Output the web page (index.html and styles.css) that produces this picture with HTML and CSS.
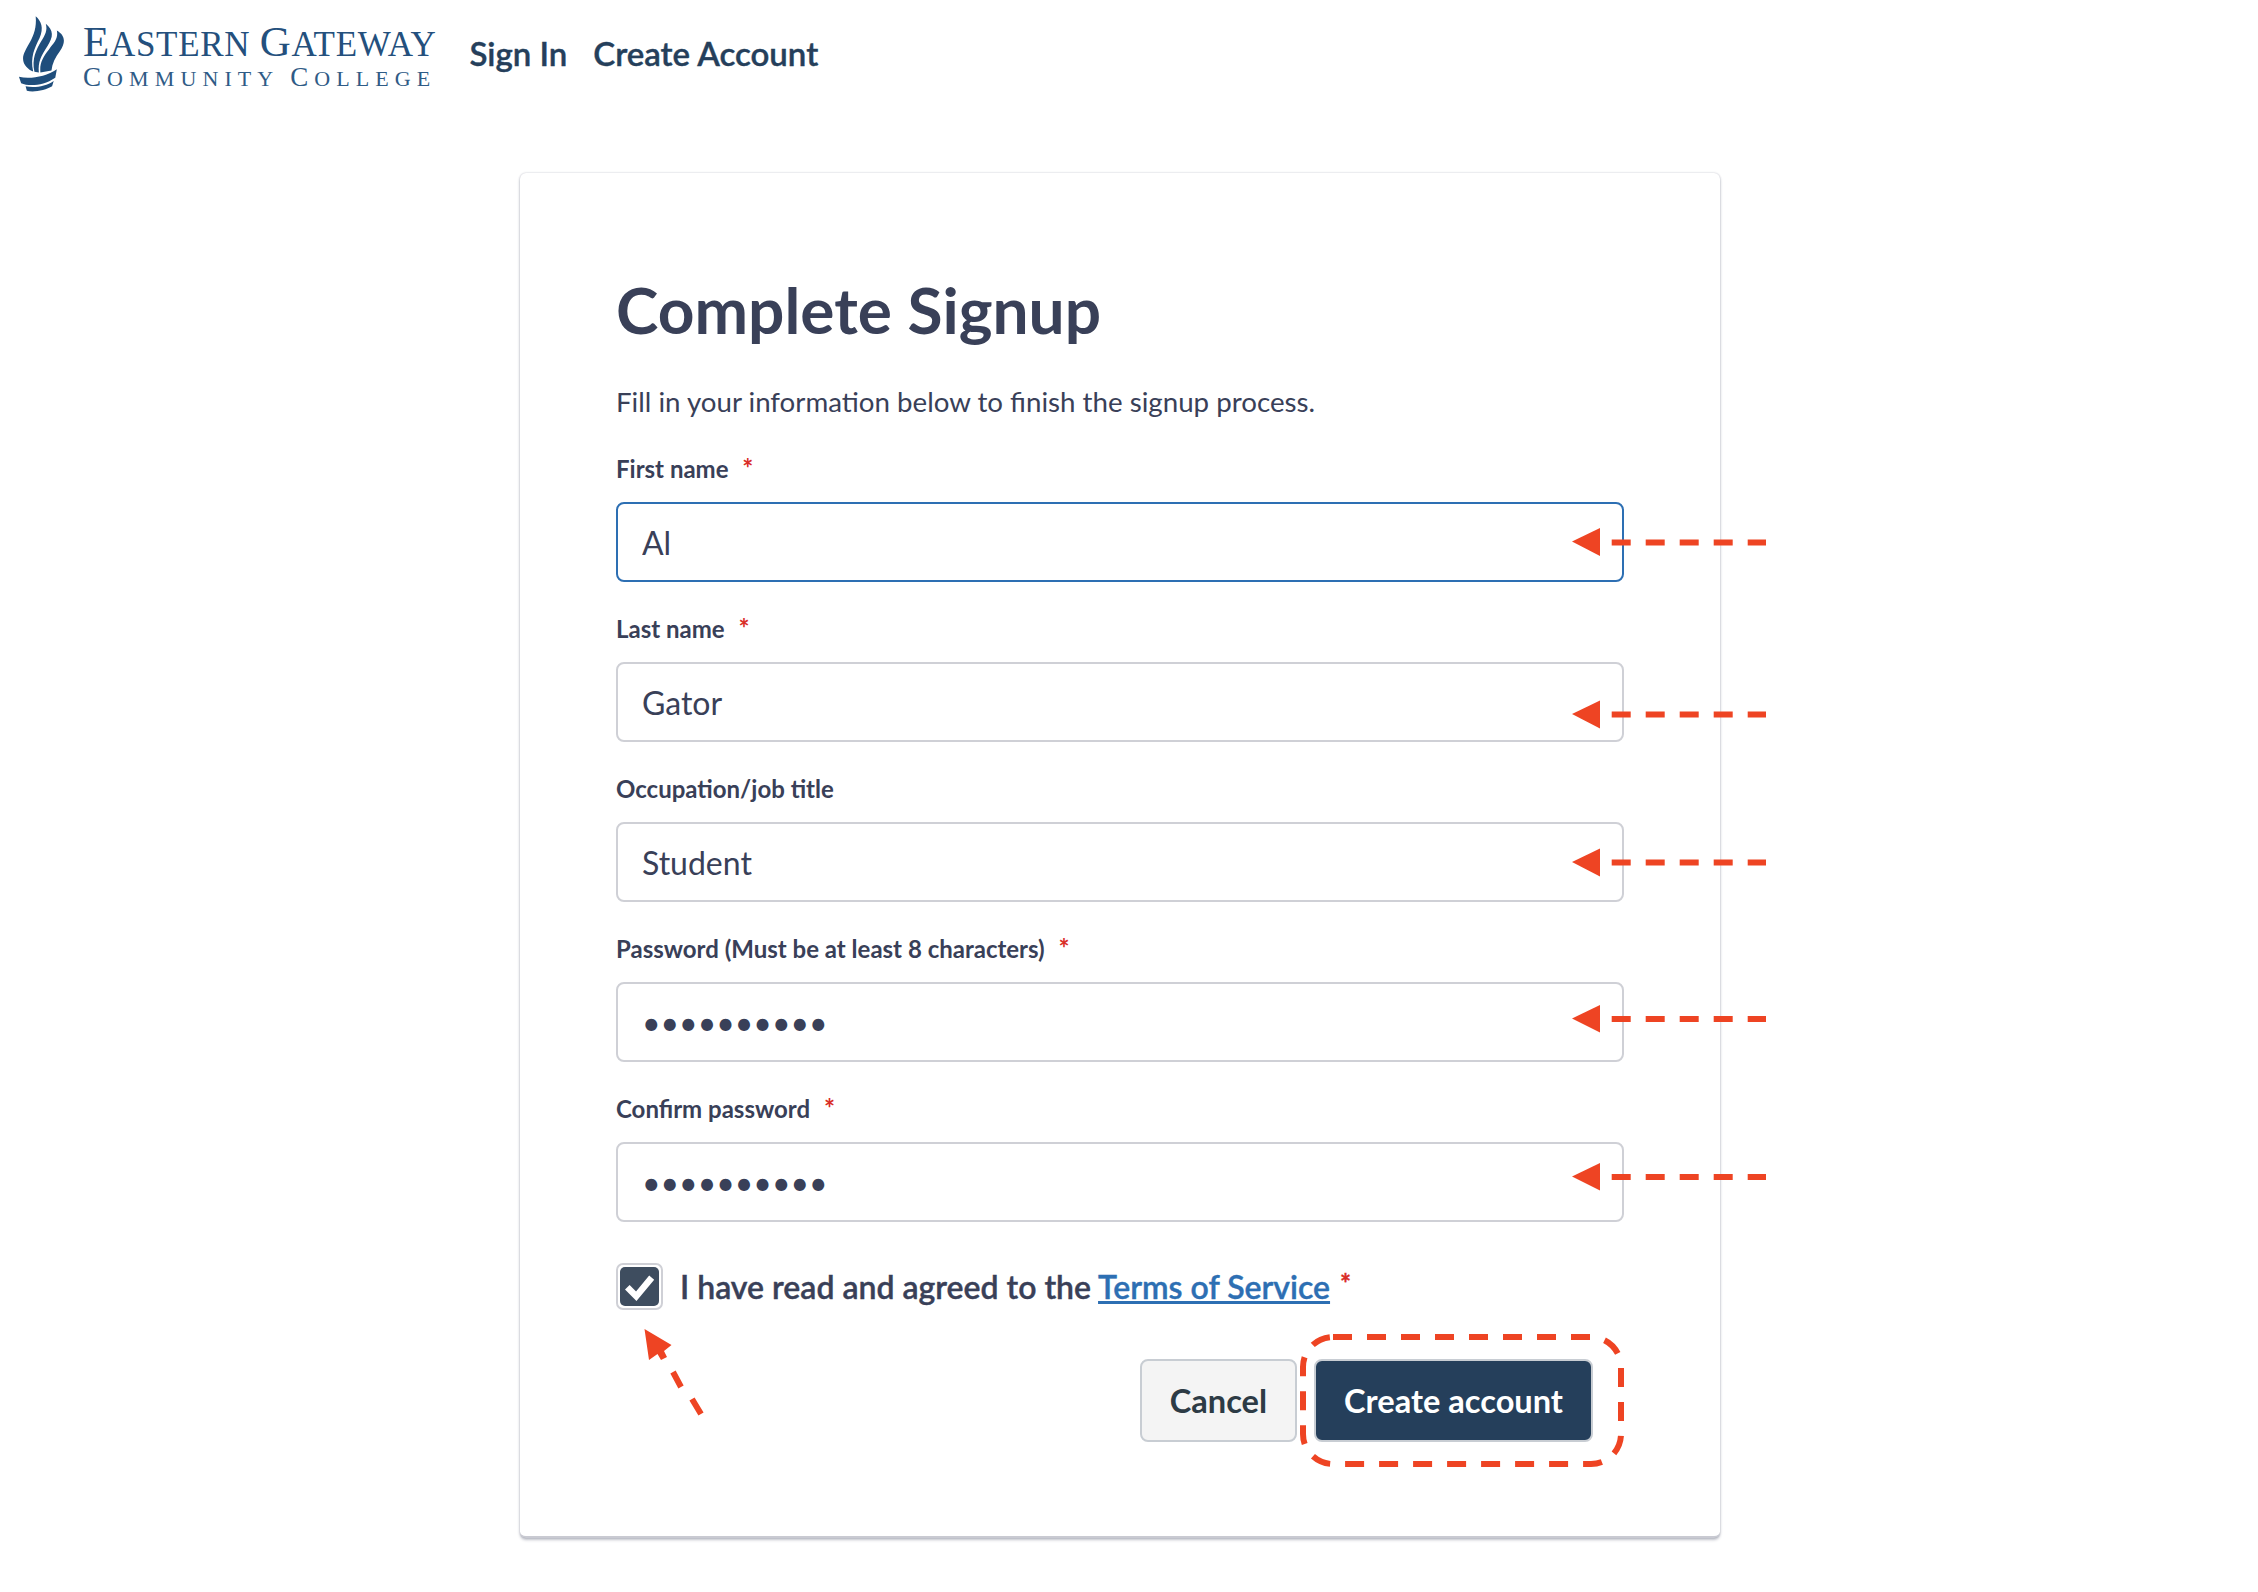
FILE: index.html
```html
<!DOCTYPE html>
<html lang="en">
<head>
    <meta charset="UTF-8">
    <title>Complete Signup</title>
    <link rel="stylesheet" href="styles.css">
</head>
<body>
    <header class="topbar">
        <a class="logo" href="#">
            <svg class="logo-torch" viewBox="52 36 152 244" aria-hidden="true">
                <path d="M108 40C125 55 135 75 120 110C105 140 90 170 100 215C85 210 68 195 68 175C68 140 115 110 108 40Z"/>
                <path d="M140 64C165 85 165 105 145 135C125 165 115 185 118 218L104 216C95 175 110 145 125 120C138 100 146 85 140 64Z"/>
                <path d="M175 85C200 100 205 120 185 150C170 170 160 190 158 212L123 218C120 190 130 170 150 145C168 122 180 110 175 85Z"/>
                <path d="M55 232C90 240 140 232 175 208L170 235C130 262 85 262 62 252Z"/>
                <path d="M76 262C105 268 140 262 165 245L160 262C140 275 100 282 80 276Z"/>
            </svg>
            <span class="logo-text">
                <span class="logo-top"><span class="big">E</span>astern <span class="big">G</span>ateway</span>
                <span class="logo-bottom"><span class="big">C</span>ommunity <span class="big">C</span>ollege</span>
            </span>
        </a>
        <nav class="nav">
            <a href="#">Sign In</a>
            <a href="#">Create Account</a>
        </nav>
    </header>

    <main class="card">
        <h1>Complete Signup</h1>
        <p class="intro">Fill in your information below to finish the signup process.</p>
        <form>
            <div class="field">
                <label for="first">First name <span class="req">*</span></label>
                <input id="first" class="focused" type="text" value="Al">
            </div>
            <div class="field">
                <label for="last">Last name <span class="req">*</span></label>
                <input id="last" type="text" value="Gator">
            </div>
            <div class="field">
                <label for="job">Occupation/job title</label>
                <input id="job" type="text" value="Student">
            </div>
            <div class="field">
                <label for="pass">Password (Must be at least 8 characters) <span class="req">*</span></label>
                <input id="pass" type="password" value="aaaaaaaaaa">
            </div>
            <div class="field">
                <label for="confirm">Confirm password <span class="req">*</span></label>
                <input id="confirm" type="password" value="aaaaaaaaaa">
            </div>
            <div class="terms">
                <span class="checkbox">
                    <svg viewBox="0 0 24 24" aria-hidden="true"><path d="M4.500 12.500L10 18L19.500 6.500"/></svg>
                </span>
                <span>I have read and agreed to the <a href="#">Terms of Service</a> <span class="req">*</span></span>
            </div>
            <div class="actions">
                <button type="button" class="button">Cancel</button>
                <button type="button" class="button primary">Create account</button>
            </div>
        </form>
    </main>

    <!-- red annotations drawn over the form -->
    <svg class="marks" width="2258" height="1592" viewBox="0 0 2258 1592" aria-hidden="true">
        <g class="fill">
            <polygon points="1572,541.500 1600,528 1600,556"/>
            <polygon points="1572,714 1600,700.500 1600,728.500"/>
            <polygon points="1572,862 1600,848.500 1600,876.500"/>
            <polygon points="1572,1018.500 1600,1005 1600,1032.500"/>
            <polygon points="1572,1176.500 1600,1163 1600,1190.500"/>
            <polygon points="644.500,1329 671.500,1345 664,1351 667,1357 661,1360 657.500,1354 649,1360"/>
        </g>
        <g class="dash">
            <path d="M1611.700 542.500H1766"/>
            <path d="M1611.700 714.500H1766"/>
            <path d="M1611.700 862.500H1766"/>
            <path d="M1611.700 1019H1766"/>
            <path d="M1611.700 1177H1766"/>
            <path d="M673 1372L681 1387M692 1399L701 1414"/>
            <rect x="1303" y="1337" width="318" height="127" rx="30"/>
        </g>
    </svg>
</body>
</html>
```

FILE: styles.css
```css
body {
    margin: 0;
    min-height: 1592px;
    overflow: hidden;
    font-family: Lato, "Open Sans", sans-serif;
    background: #fff;
    color: #394058;
}
a {
    text-decoration: none;
}
.topbar {
    display: flex;
    align-items: center;
    height: 106px;
    padding-left: 18px;
}
.logo {
    display: flex;
    align-items: center;
    gap: 17px;
}
.logo-torch {
    width: 48px;
    height: 79px;
    fill: #1f4e7c;
}
.logo-text {
    display: flex;
    flex-direction: column;
    gap: 4px;
    padding-top: 8px;
    font-family: "Liberation Serif", serif;
    color: #24507d;
    white-space: nowrap;
    text-transform: uppercase;
}
.logo-top {
    font-size: 35px;
    line-height: 34px;
    letter-spacing: 0.7px;
}
.logo-top .big {
    font-size: 43px;
}
.logo-bottom {
    font-size: 22px;
    line-height: 22px;
    letter-spacing: 6.1px;
    color: #2f5b86;
}
.logo-bottom .big {
    font-size: 27px;
}
.nav {
    display: flex;
    gap: 26px;
    margin-left: 33px;
}
.nav a {
    font-size: 33px;
    font-weight: 600;
    color: #253f5b;
    -webkit-text-stroke: 0.4px #253f5b;
}
.card {
    box-sizing: border-box;
    width: 1200px;
    height: 1365px;
    margin: 67px 0 0 520px;
    padding: 97px 96px 0;
    border-bottom: 2px solid #c9cad2;
    border-radius: 6px;
    background: #fff;
    box-shadow: 0 0 2px rgba(57, 64, 88, 0.3), 0 2px 3px rgba(57, 64, 88, 0.3);
}
h1 {
    margin: 0;
    font-size: 64px;
    line-height: 80px;
    font-weight: 700;
}
.intro {
    margin: 32px 0 0;
    font-size: 27.7px;
    line-height: 40px;
}
form {
    margin-top: 32px;
}
.field {
    margin-bottom: 32px;
}
.field label {
    display: block;
    margin-bottom: 18px;
    font-size: 24px;
    line-height: 30px;
    font-weight: 700;
}
.req {
    margin-left: 8px;
    color: #d92d27;
    font-size: 26px;
    font-weight: 700;
    line-height: 0;
}
input {
    display: block;
    box-sizing: border-box;
    width: 100%;
    height: 80px;
    padding: 0 24px;
    border: 2px solid #cfd0d6;
    border-radius: 8px;
    outline: none;
    font-family: inherit;
    font-size: 32px;
    color: #394058;
}
input.focused {
    border-color: #2d6fb3;
}
.terms {
    display: flex;
    align-items: center;
    gap: 17px;
    margin-top: 41px;
    font-size: 32px;
    font-weight: 600;
    -webkit-text-stroke: 0.4px;
}
.terms a {
    color: #2d6fb3;
    text-decoration: underline;
}
.terms .req {
    margin-left: 2px;
    vertical-align: 6px;
}
.checkbox {
    box-sizing: border-box;
    display: block;
    width: 47px;
    height: 47px;
    padding: 2px;
    border: 2px solid #cfd0d6;
    border-radius: 7px;
    background: #fff;
    flex: none;
}
.checkbox svg {
    display: block;
    width: 39px;
    height: 39px;
    border-radius: 5px;
    background: #3e4d5f;
    fill: none;
    stroke: #fff;
    stroke-width: 4;
}
.actions {
    display: flex;
    justify-content: flex-end;
    gap: 17px;
    margin: 49px 31px 0 0;
}
.button {
    height: 83px;
    padding: 0 28px;
    border: 2px solid #c8cdd3;
    border-radius: 8px;
    background: #f4f4f4;
    color: #2d3b45;
    font-family: inherit;
    font-size: 32.6px;
    font-weight: 700;
}
.button.primary {
    background: #253f5b;
    color: #fff;
}
.marks {
    position: absolute;
    top: 0;
    left: 0;
    pointer-events: none;
}
.marks .fill {
    fill: #ee4423;
}
.marks .dash {
    fill: none;
    stroke: #ee4423;
    stroke-width: 6;
    stroke-dasharray: 19 15;
}
```
